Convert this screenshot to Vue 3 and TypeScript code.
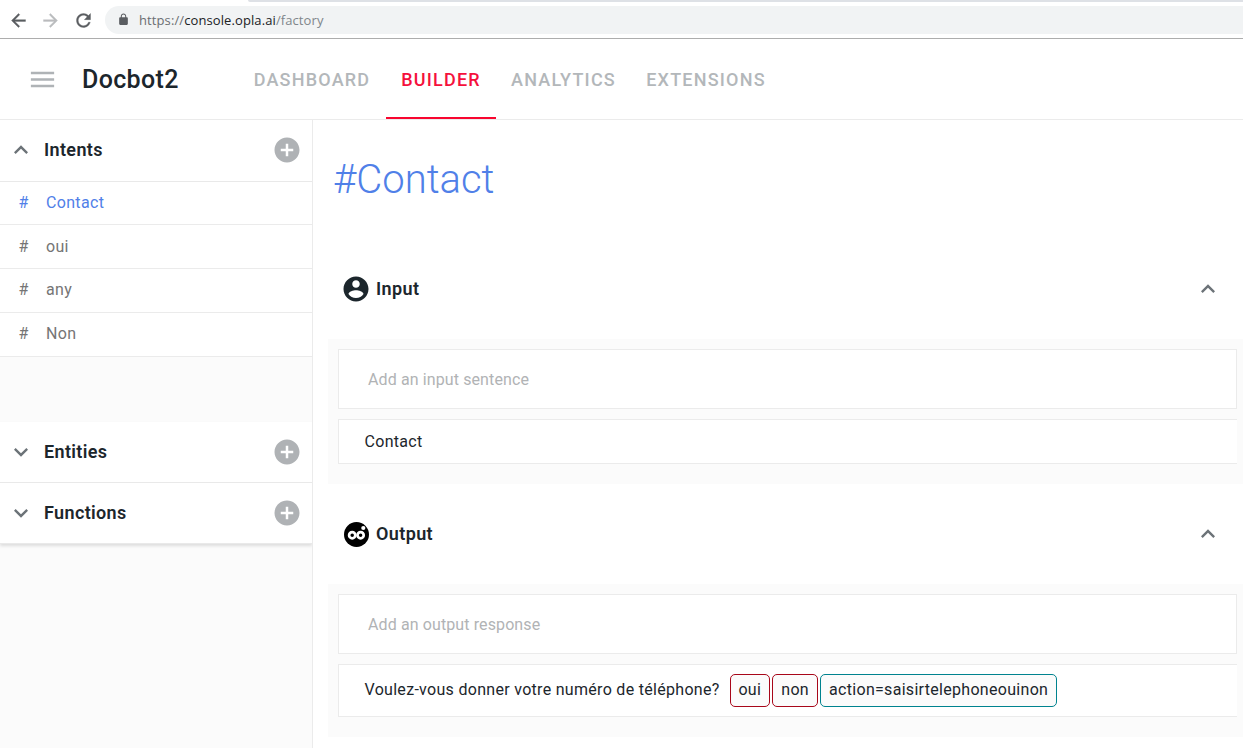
<script setup lang="ts">
interface Tab { label: string; key: string; active?: boolean }
interface Tag { label: string; kind: 'button' | 'action' }

const tabs: Tab[] = [
  { label: 'DASHBOARD', key: 'dashboard' },
  { label: 'BUILDER', key: 'builder', active: true },
  { label: 'ANALYTICS', key: 'analytics' },
  { label: 'EXTENSIONS', key: 'extensions' },
]
const intents: string[] = ['Contact', 'oui', 'any', 'Non']
const selected = 'Contact'
const sections: string[] = ['Entities', 'Functions']
const tags: Tag[] = [
  { label: 'oui', kind: 'button' },
  { label: 'non', kind: 'button' },
  { label: 'action=saisirtelephoneouinon', kind: 'action' },
]

const icons = {
  back: 'M20 11H7.83l5.59-5.59L12 4l-8 8 8 8 1.41-1.41L7.83 13H20v-2z',
  forward: 'M12 4l-1.41 1.41L16.17 11H4v2h12.17l-5.58 5.59L12 20l8-8z',
  reload: 'M17.65 6.35C16.2 4.9 14.21 4 12 4c-4.42 0-7.99 3.58-7.99 8s3.57 8 7.99 8c3.73 0 6.84-2.55 7.73-6h-2.08c-.82 2.33-3.04 4-5.65 4-3.31 0-6-2.69-6-6s2.69-6 6-6c1.66 0 3.14.69 4.22 1.78L13 11h7V4l-2.35 2.35z',
  lock: 'M18 8h-1V6c0-2.76-2.24-5-5-5S7 3.24 7 6v2H6c-1.1 0-2 .9-2 2v10c0 1.1.9 2 2 2h12c1.1 0 2-.9 2-2V10c0-1.1-.9-2-2-2zm-2.9 0H8.9V6c0-1.71 1.39-3.1 3.1-3.1s3.1 1.39 3.1 3.1v2z',
  menu: 'M3 18h18v-2H3v2zm0-5h18v-2H3v2zm0-7v2h18V6H3z',
  up: 'M12 8l-6 6 1.41 1.41L12 10.83l4.59 4.58L18 14z',
  down: 'M16.59 8.59L12 13.17 7.41 8.59 6 10l6 6 6-6z',
  add: 'M12 2C6.48 2 2 6.48 2 12s4.48 10 10 10 10-4.48 10-10S17.52 2 12 2zm5 11h-4v4h-2v-4H7v-2h4V7h2v4h4v2z',
  user: 'M12 2C6.48 2 2 6.48 2 12s4.48 10 10 10 10-4.48 10-10S17.52 2 12 2zm0 3c1.66 0 3 1.34 3 3s-1.34 3-3 3-3-1.34-3-3 1.34-3 3-3zm0 14.2c-2.5 0-4.71-1.28-6-3.22.03-1.99 4-3.08 6-3.08 1.99 0 5.97 1.09 6 3.08-1.29 1.94-3.5 3.22-6 3.22z',
}
</script>

<template>
  <div class="page">
    <div class="browser">
      <div class="strip"></div>
      <div class="toolbar">
        <svg class="nav-icon" viewBox="0 0 24 24"><path :d="icons.back" /></svg>
        <svg class="nav-icon dim" viewBox="0 0 24 24"><path :d="icons.forward" /></svg>
        <svg class="nav-icon reload" viewBox="0 0 24 24"><path :d="icons.reload" /></svg>
        <div class="omnibox">
          <svg class="lock" viewBox="0 0 24 24"><path :d="icons.lock" /></svg>
          <span class="url"><span>https://</span><b>console.opla.ai</b><i>/factory</i></span>
        </div>
      </div>
    </div>

    <header class="header">
      <svg class="menu" viewBox="0 0 24 24"><path :d="icons.menu" /></svg>
      <h1 class="app-name">Docbot2</h1>
      <nav class="tabs">
        <a v-for="t in tabs" :key="t.key" :class="['tab', t.key, { active: t.active }]">{{ t.label }}</a>
      </nav>
    </header>

    <div class="body">
      <aside class="sidebar">
        <div class="section first">
          <svg class="chev" viewBox="0 0 24 24"><path :d="icons.up" /></svg>
          <span class="section-title">Intents</span>
          <svg class="add" viewBox="0 0 24 24"><path :d="icons.add" /></svg>
        </div>
        <ul class="items">
          <li v-for="i in intents" :key="i" :class="['item', { selected: i === selected }]">
            <span class="hash">#</span><span>{{ i }}</span>
          </li>
        </ul>
        <div class="spacer"></div>
        <div class="group">
          <div v-for="s in sections" :key="s" class="section">
            <svg class="chev" viewBox="0 0 24 24"><path :d="icons.down" /></svg>
            <span class="section-title">{{ s }}</span>
            <svg class="add" viewBox="0 0 24 24"><path :d="icons.add" /></svg>
          </div>
        </div>
      </aside>

      <main class="main">
        <h2 class="title">#Contact</h2>

        <div class="panel-head">
          <svg class="user" viewBox="0 0 24 24"><path :d="icons.user" /></svg>
          <span class="panel-title">Input</span>
          <svg class="chev" viewBox="0 0 24 24"><path :d="icons.up" /></svg>
        </div>
        <div class="panel">
          <div class="field">Add an input sentence</div>
          <div class="row">Contact</div>
        </div>

        <div class="panel-head">
          <svg class="bot" viewBox="0 0 25 25">
            <circle cx="12.5" cy="12.5" r="12.5" />
            <circle class="eye" cx="8.2" cy="13.2" r="3.1" />
            <circle class="eye" cx="16.6" cy="13.2" r="3.1" />
            <circle class="spark" cx="19.3" cy="6" r="2.1" />
          </svg>
          <span class="panel-title">Output</span>
          <svg class="chev" viewBox="0 0 24 24"><path :d="icons.up" /></svg>
        </div>
        <div class="panel">
          <div class="field">Add an output response</div>
          <div class="row tall">
            <span class="sentence">Voulez-vous donner votre numéro de téléphone?</span>
            <span v-for="t in tags" :key="t.label" :class="['tag', t.kind]">{{ t.label }}</span>
          </div>
        </div>
      </main>
    </div>
  </div>
</template>

<style>
body { margin: 0; overflow: hidden; }
</style>

<style scoped>
.page {
  box-sizing: border-box;
  width: 100%;
  height: 748px;
  overflow: hidden;
  display: flex;
  flex-direction: column;
  background: #fff;
  font-family: Roboto, "Liberation Sans", sans-serif;
  font-size: 16px;
  color: #1c262c;
  white-space: nowrap;
}
.page * { box-sizing: border-box; }
svg { display: block; flex: none; fill: currentColor; }

.browser { flex: none; height: 39px; border-bottom: 1px solid #adadad; }
.strip { height: 2px; margin-left: 248px; background: #dee1e6; border-bottom-left-radius: 2px; }
.toolbar { height: 36px; display: flex; align-items: center; padding-left: 8px; color: #5a5d61; }
.nav-icon { width: 21px; height: 21px; margin-right: 11px; stroke: currentColor; stroke-width: 0.4; }
.nav-icon.dim { color: #babcbe; }
.nav-icon.reload { margin: 0 10.5px 0 0.5px; }
.omnibox {
  flex: 1;
  height: 28px;
  margin: 0 0 0 1px;
  padding-left: 11.5px;
  display: flex;
  align-items: center;
  background: #f1f3f4;
  border-radius: 14px 0 0 14px;
}
.lock { width: 13px; height: 13px; margin: 0 9.5px 1px 0; }
.url { font: 13px/18px "Open Sans", "Noto Sans", sans-serif; letter-spacing: 0.1px; color: #6b6e72; }
.url b { font-weight: 400; color: #202124; }
.url i { font-style: normal; color: #80868b; }

.header {
  flex: none;
  height: 81px;
  display: flex;
  align-items: center;
  padding-left: 26.5px;
  border-bottom: 1px solid #ebebeb;
}
.menu { width: 31px; height: 31px; color: #afb3b6; }
.app-name { margin: 0 0 0 24.5px; width: 156px; font-size: 25px; font-weight: 500; letter-spacing: 0.35px; }
.tabs { display: flex; align-self: stretch; }
.tab {
  display: flex;
  align-items: center;
  height: 80px;
  padding: 2px 0 0;
  justify-content: center;
  border-bottom: 2px solid transparent;
  font-size: 18px;
  font-weight: 500;
  letter-spacing: 1.2px;
  color: #b3b7ba;
}
.tab.dashboard { width: 148px; }
.tab.builder { width: 110px; }
.tab.analytics { width: 135px; }
.tab.extensions { width: 150px; }
.tab.active { color: #f5103c; border-bottom-color: #f8062f; }

.body { flex: 1; min-height: 0; display: flex; }
.sidebar { flex: none; width: 313px; background: #fbfbfb; border-right: 1px solid #ebebeb; overflow: hidden; }
.section {
  display: flex;
  align-items: center;
  height: 61px;
  padding: 0 10px 0 7px;
  background: #fff;
  border-bottom: 1px solid #e9e9e9;
}
.section.first { height: 62px; padding-bottom: 1px; }
.chev { width: 28px; height: 28px; color: #6c7378; }
.section-title { flex: 1; margin-left: 9px; padding-bottom: 2px; font-size: 18px; font-weight: 600; letter-spacing: 0.36px; }
.add { width: 30px; height: 30px; color: #afb2b5; }
.items { list-style: none; margin: 0; padding: 0; background: #fff; }
.item {
  display: flex;
  align-items: center;
  height: 44px;
  padding: 0 0 2px 18.5px;
  border-bottom: 1px solid #ebebeb;
  letter-spacing: 0.33px;
  color: #757575;
}
.item:first-child { height: 43px; }
.item:nth-child(2) { padding-bottom: 0; }
.item.selected { color: #5080e8; }
.hash { width: 27.5px; }
.spacer { height: 65px; }
.group { box-shadow: 0 2px 3px rgba(0, 0, 0, 0.12); }

.main { flex: 1; min-width: 0; padding-left: 15px; }
.title {
  margin: 0;
  height: 119px;
  padding: 36px 0 0 5px;
  font-size: 40px;
  line-height: 48px;
  font-weight: 300;
  color: #5080e8;
}
.panel-head { height: 100px; display: flex; align-items: center; padding: 0 21px 0 13px; }
.user { width: 30px; height: 30px; }
.bot { width: 25px; height: 25px; margin: 1px 2px 0 3px; fill: #000; }
.eye { fill: #000; stroke: #fff; stroke-width: 2.7; }
.spark { fill: #fff; }
.panel-title { flex: 1; margin-left: 5px; padding-bottom: 2px; font-size: 18px; font-weight: 600; letter-spacing: 0.38px; }
.panel { background: #fbfbfb; padding: 10px 6px 20px 10px; }
.field {
  display: flex;
  align-items: center;
  height: 60px;
  padding-left: 29px;
  margin-bottom: 10px;
  background: #fff;
  border: 1px solid #ebebeb;
  color: #b1b3b5;
  letter-spacing: 0.11px;
}
.row {
  display: flex;
  align-items: center;
  height: 45px;
  padding-left: 25.5px;
  background: #fff;
  border: 1px solid #ebebeb;
  border-right: 0;
  letter-spacing: 0.3px;
}
.row.tall { height: 53px; }
.sentence { margin-right: 10px; padding-bottom: 2px; }
.tag {
  height: 33px;
  line-height: 30px;
  padding: 0 7.8px;
  margin-right: 2.5px;
  border: 1px solid #a8071a;
  border-radius: 5px;
  background: #fbfbfb;
}
.tag.action { border-color: #00838f; }
</style>
